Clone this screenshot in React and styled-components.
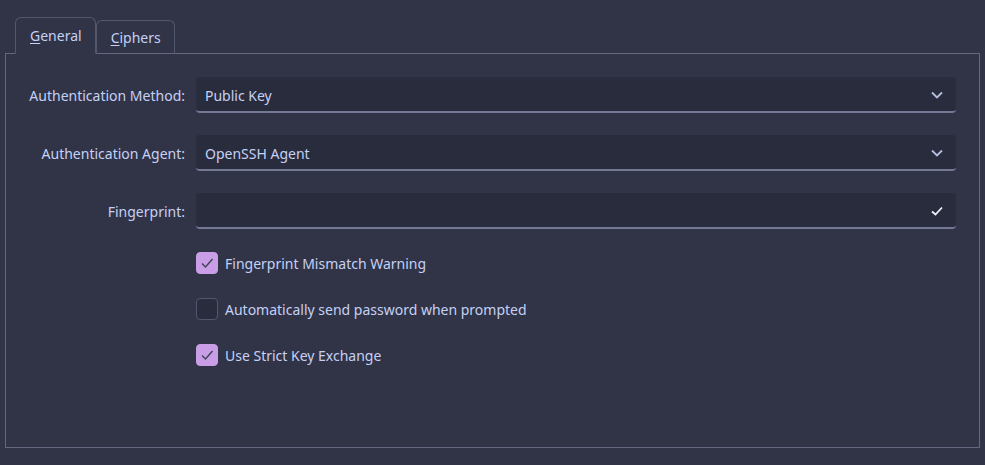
import React from "react";
import styled, { createGlobalStyle } from "styled-components";

const Global = createGlobalStyle`
  html, body { margin: 0; padding: 0; background: #303446; }
  body { font-family: "Noto Sans", "Open Sans", sans-serif; font-size: 14px; color: #c6d0f5; }
  * { box-sizing: border-box; }
`;

const Page = styled.div`
  width: 985px;
  height: 465px;
  background: #303446;
  padding: 17px 5px 0 5px;
`;

const TabBar = styled.div`
  display: flex;
  align-items: flex-end;
  padding-left: 10px;
  height: 37px;
  position: relative;
  z-index: 1;
  margin-bottom: -1px;
`;

const Tab = styled.div`
  height: ${(p) => (p.$active ? 37 : 34)}px;
  padding: 0 13px 0 14px;
  display: flex;
  align-items: center;
  border: 1px solid #51576d;
  border-bottom: ${(p) => (p.$active ? "1px solid #303446" : "1px solid #626880")};
  border-radius: 6px 6px 0 0;
  background: #303446;
  color: #c6d0f5;
  font-size: 14px;
  & u { text-decoration-thickness: 1px; text-underline-offset: 2px; }
`;

const Frame = styled.div`
  height: 395px;
  border: 1px solid #626880;
  padding: 23px 23px 0 0;
  display: flex;
  flex-direction: column;
`;

const Fields = styled.div`
  display: flex;
  flex-direction: column;
  gap: 22px;
`;

const Row = styled.div`
  display: grid;
  grid-template-columns: 179px 1fr;
  column-gap: 11px;
  align-items: center;
`;

const Label = styled.div`
  text-align: right;
  color: #c6d0f5;
  font-size: 14px;
`;

const Combo = styled.div`
  height: 36px;
  background: #292c3c;
  border-radius: 4px;
  border-bottom: 2px solid #737994;
  display: flex;
  align-items: center;
  justify-content: space-between;
  padding: 2px 13px 0 9px;
  color: #c6d0f5;
  font-size: 14px;
`;

const Checks = styled.div`
  margin-top: 23px;
  display: flex;
  flex-direction: column;
  gap: 24px;
  padding-left: 190px;
`;

const CheckRow = styled.label`
  display: flex;
  align-items: center;
  gap: 7px;
  height: 22px;
  font-size: 14px;
  color: #c6d0f5;
`;

const Box = styled.span`
  width: 22px;
  height: 22px;
  border-radius: 4px;
  display: flex;
  align-items: center;
  justify-content: center;
  background: ${(p) => (p.$checked ? "#ca9ee6" : "#292c3c")};
  border: 1px solid ${(p) => (p.$checked ? "#ca9ee6" : "#51576d")};
`;

const Chevron = ({ check }) =>
  check ? (
    <svg width="12" height="10" viewBox="0 0 12 10">
      <path d="M1 5.5 L4.5 8.5 L11 1.5" fill="none" stroke="#eef1fb" strokeWidth="1.8" />
    </svg>
  ) : (
    <svg width="12" height="8" viewBox="0 0 12 8">
      <path d="M1 1.5 L6 6.5 L11 1.5" fill="none" stroke="#b5bfe2" strokeWidth="1.8" />
    </svg>
  );

const Tick = () => (
  <svg width="14" height="12" viewBox="0 0 14 12">
    <path d="M2 6.5 L5.5 10 L12.5 2" fill="none" stroke="#414559" strokeWidth="1.5" />
  </svg>
);

const fields = [
  { label: "Authentication Method:", value: "Public Key" },
  { label: "Authentication Agent:", value: "OpenSSH Agent" },
  { label: "Fingerprint:", value: "", check: true },
];

const checks = [
  { label: "Fingerprint Mismatch Warning", checked: true },
  { label: "Automatically send password when prompted", checked: false },
  { label: "Use Strict Key Exchange", checked: true },
];

export default function App() {
  return (
    <Page>
      <Global />
      <TabBar>
        <Tab $active>
          <span><u>G</u>eneral</span>
        </Tab>
        <Tab>
          <span><u>C</u>iphers</span>
        </Tab>
      </TabBar>
      <Frame>
        <Fields>
          {fields.map((f) => (
            <Row key={f.label}>
              <Label>{f.label}</Label>
              <Combo>
                <span>{f.value}</span>
                <Chevron check={f.check} />
              </Combo>
            </Row>
          ))}
        </Fields>
        <Checks>
          {checks.map((c) => (
            <CheckRow key={c.label}>
              <Box $checked={c.checked}>{c.checked && <Tick />}</Box>
              {c.label}
            </CheckRow>
          ))}
        </Checks>
      </Frame>
    </Page>
  );
}
